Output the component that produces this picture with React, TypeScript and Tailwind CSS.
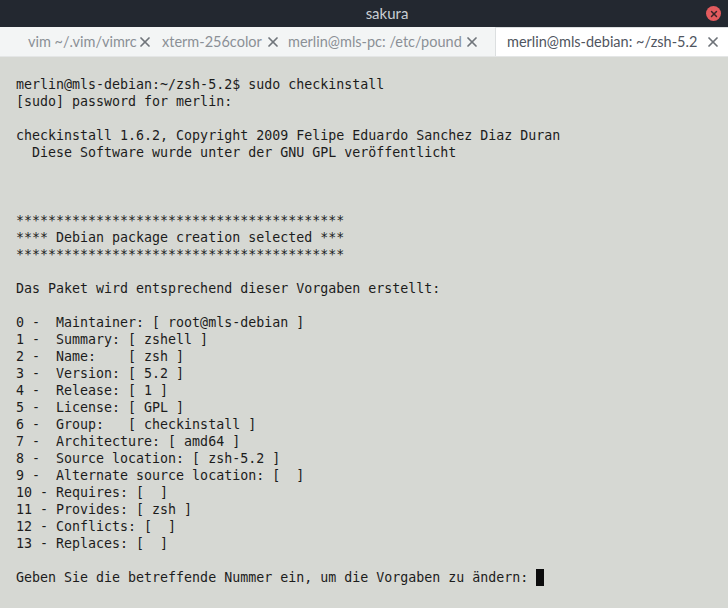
import { X } from "lucide-react"

const lines = [
    "merlin@mls-debian:~/zsh-5.2$ sudo checkinstall",
    "[sudo] password for merlin:",
    "",
    "checkinstall 1.6.2, Copyright 2009 Felipe Eduardo Sanchez Diaz Duran",
    "  Diese Software wurde unter der GNU GPL veröffentlicht",
    "",
    "",
    "",
    "*****************************************",
    "**** Debian package creation selected ***",
    "*****************************************",
    "",
    "Das Paket wird entsprechend dieser Vorgaben erstellt:",
    "",
    "0 -  Maintainer: [ root@mls-debian ]",
    "1 -  Summary: [ zshell ]",
    "2 -  Name:    [ zsh ]",
    "3 -  Version: [ 5.2 ]",
    "4 -  Release: [ 1 ]",
    "5 -  License: [ GPL ]",
    "6 -  Group:   [ checkinstall ]",
    "7 -  Architecture: [ amd64 ]",
    "8 -  Source location: [ zsh-5.2 ]",
    "9 -  Alternate source location: [  ]",
    "10 - Requires: [  ]",
    "11 - Provides: [ zsh ]",
    "12 - Conflicts: [  ]",
    "13 - Replaces: [  ]",
    "",
]

const tabs = [
    { label: "vim ~/.vim/vimrc", box: "w-[156px] pl-[28px] pr-[5px]" },
    { label: "xterm-256color", box: "w-[131px] pl-[6px] pr-[6px]" },
    { label: "merlin@mls-pc: /etc/pound", box: "w-[208px] pl-[1px] pr-[15px]" },
]

export default function App() {
    return (
        <div className="w-[728px] h-[608px] flex flex-col bg-[#d6d8d3] overflow-hidden">
            <div className="h-[27px] bg-[#232830] flex items-center relative shrink-0">
                <span className="flex-1 text-center pl-[46px] text-[15px] text-[#c9ced3] font-['Lato',sans-serif]">
                    sakura
                </span>
                <div className="absolute right-[7px] top-[6px] w-[15px] h-[15px] rounded-full bg-[#e35b5e] flex items-center justify-center">
                    <X className="w-[10px] h-[10px] text-[#3a2428]" strokeWidth={3.5} />
                </div>
            </div>

            <div className="h-[30px] bg-[#f3f5f5] flex items-end shrink-0 font-['Lato',sans-serif] text-[14.5px] whitespace-nowrap border-b border-[#e4e6e6]">
                {tabs.map((t) => (
                    <div key={t.label} className={`${t.box} shrink-0 h-[28px] flex items-center justify-between text-[#8b9096]`}>
                        <span>{t.label}</span>
                        <X className="w-[16px] h-[16px] shrink-0 text-[#70757b]" strokeWidth={2.6} />
                    </div>
                ))}
                <div className="flex-1 h-[29px] bg-white border-l border-t border-[#dcdfe0] pl-[11px] pr-[7px] flex items-center justify-between text-[#4f5560]">
                    <span>merlin@mls-debian: ~/zsh-5.2</span>
                    <X className="w-[16px] h-[16px] shrink-0 text-[#6d7278]" strokeWidth={2.6} />
                </div>
            </div>

            <div className="pt-[19px] pl-[16px] font-['DejaVu_Sans_Mono',monospace] text-[13.3px] leading-[17px] text-[#1c1c1c] whitespace-pre">
                {lines.map((l, i) => (
                    <div key={i} className="h-[17px]">{l}</div>
                ))}
                <div className="h-[17px] flex items-center">
                    <span>Geben Sie die betreffende Nummer ein, um die Vorgaben zu ändern: </span>
                    <span className="inline-block w-[8px] h-[17px] bg-[#0c0c0c]" />
                </div>
            </div>
        </div>
    )
}
